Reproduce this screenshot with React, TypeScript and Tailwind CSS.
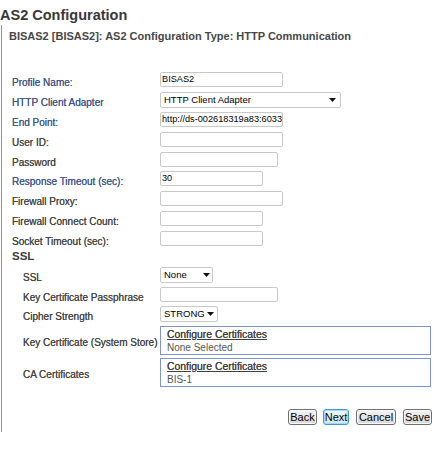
import type { ReactNode } from "react";

type RowProps = {
  label: string;
  required?: boolean;
  indent?: boolean;
  h: string;
  children: ReactNode;
};

function Row({ label, required, indent, h, children }: RowProps) {
  return (
    <div className={`flex items-start ${h}`}>
      <div
        className={`shrink-0 pt-[5px] text-[10px] leading-[12px] whitespace-nowrap [text-shadow:0_0_0.4px_currentColor] ${
          indent ? "w-[137px]" : "w-[148px]"
        } ${required ? "text-[#42578c]" : "text-[#474747]"}`}
      >
        {label}
      </div>
      {children}
    </div>
  );
}

function TextBox({ w, value }: { w: string; value?: string }) {
  return (
    <div
      className={`${w} h-[15px] overflow-hidden whitespace-nowrap rounded-[2px] border border-[#c8c8c8] bg-white pl-[1px] text-[9.2px] leading-[13px] text-black`}
    >
      {value}
    </div>
  );
}

function Caret() {
  return (
    <svg width="7" height="4" viewBox="0 0 7 4" className="shrink-0">
      <polygon points="0,0 7,0 3.5,4" fill="#111" />
    </svg>
  );
}

function Dropdown({ w, value, pr }: { w: string; value: string; pr: string }) {
  return (
    <div
      className={`${w} ${pr} flex h-[16px] items-center justify-between rounded-[2px] border border-[#c8c8c8] bg-white pl-[3px] text-[9.5px] text-black`}
    >
      <span className="whitespace-nowrap">{value}</span>
      <Caret />
    </div>
  );
}

function CertBox({ status }: { status: string }) {
  return (
    <div className="h-[29px] w-[271px] border border-[#7f93d8] pl-[6px] pt-[2px]">
      <div className="text-[10.4px] leading-[12.5px] text-[#404040] underline underline-offset-1 [text-shadow:0_0_0.4px_currentColor]">
        Configure Certificates
      </div>
      <div className="text-[10px] leading-[12.5px] text-[#555]">{status}</div>
    </div>
  );
}

function Btn({ label, cls, focused }: { label: string; cls: string; focused?: boolean }) {
  return (
    <button
      className={`${cls} h-[16px] rounded-[3px] border bg-linear-to-b p-0 text-[11px] leading-[13px] text-black ${
        focused
          ? "border-[#3c9ad8] from-[#eef7fd] to-[#cde7f8] shadow-[inset_0_0_0_1px_#a8d8f6]"
          : "border-[#707070] from-[#f4f4f4] to-[#d8d8d8] shadow-[inset_0_0_0_1px_#fafafa]"
      }`}
    >
      {label}
    </button>
  );
}

export default function App() {
  return (
    <div className="min-h-[452px] w-[445px] bg-white font-['Liberation_Sans',Arial,sans-serif]">
      <h1 className="pt-[7px] text-[14.5px] font-bold leading-[17px] text-[#383838]">
        AS2 Configuration
      </h1>

      <div className="ml-[1px] mt-[1px] flex h-[407px] w-[432px] flex-col border-l border-[#8092d4]">
        <div className="pl-[7px] pt-[4px] text-[11px] font-bold leading-[14px] text-[#474747]">
          BISAS2 [BISAS2]: AS2 Configuration Type: HTTP Communication
        </div>

        <div className="mt-[29px] pl-[10px]">
          <Row label="Profile Name:" required h="h-[20px]">
            <TextBox w="w-[123px]" value="BISAS2" />
          </Row>
          <Row label="HTTP Client Adapter" required h="h-[20px]">
            <Dropdown w="w-[181px]" pr="pr-[4px]" value="HTTP Client Adapter" />
          </Row>
          <Row label="End Point:" required h="h-[20px]">
            <TextBox w="w-[123px]" value="http://ds-002618319a83:6033" />
          </Row>
          <Row label="User ID:" h="h-[20px]">
            <TextBox w="w-[123px]" />
          </Row>
          <Row label="Password" h="h-[19px]">
            <TextBox w="w-[118px]" />
          </Row>
          <Row label="Response Timeout (sec):" required h="h-[20px]">
            <TextBox w="w-[103px]" value="30" />
          </Row>
          <Row label="Firewall Proxy:" h="h-[20px]">
            <TextBox w="w-[123px]" />
          </Row>
          <Row label="Firewall Connect Count:" h="h-[20px]">
            <TextBox w="w-[103px]" />
          </Row>
          <Row label="Socket Timeout (sec):" h="h-[18px]">
            <TextBox w="w-[103px]" />
          </Row>

          <div className="h-[18px] text-[11.5px] font-bold leading-[14px] text-[#3c3c3c]">SSL</div>

          <div className="pl-[11px]">
            <Row label="SSL" indent h="h-[20px]">
              <Dropdown w="w-[53px]" pr="pr-[2px]" value="None" />
            </Row>
            <Row label="Key Certificate Passphrase" indent h="h-[19px]">
              <TextBox w="w-[118px]" />
            </Row>
            <Row label="Cipher Strength" indent h="h-[20px]">
              <Dropdown w="w-[58px]" pr="pr-[3px]" value="STRONG" />
            </Row>
            <div className="flex h-[32px] items-start">
              <div className="w-[137px] shrink-0 whitespace-nowrap pt-[11px] text-[10px] leading-[12px] text-[#474747] [text-shadow:0_0_0.4px_currentColor]">
                Key Certificate (System Store)
              </div>
              <CertBox status="None Selected" />
            </div>
            <div className="flex h-[29px] items-start">
              <div className="w-[137px] shrink-0 whitespace-nowrap pt-[11px] text-[10px] leading-[12px] text-[#474747] [text-shadow:0_0_0.4px_currentColor]">
                CA Certificates
              </div>
              <CertBox status="BIS-1" />
            </div>
          </div>
        </div>

        <div className="mt-[22px] flex items-start justify-end pr-[1px]">
          <Btn label="Back" cls="w-[29px]" />
          <Btn label="Next" cls="ml-[6px] w-[26px]" focused />
          <Btn label="Cancel" cls="ml-[7px] w-[40px]" />
          <Btn label="Save" cls="ml-[7px] w-[29px]" />
        </div>
      </div>
    </div>
  );
}
